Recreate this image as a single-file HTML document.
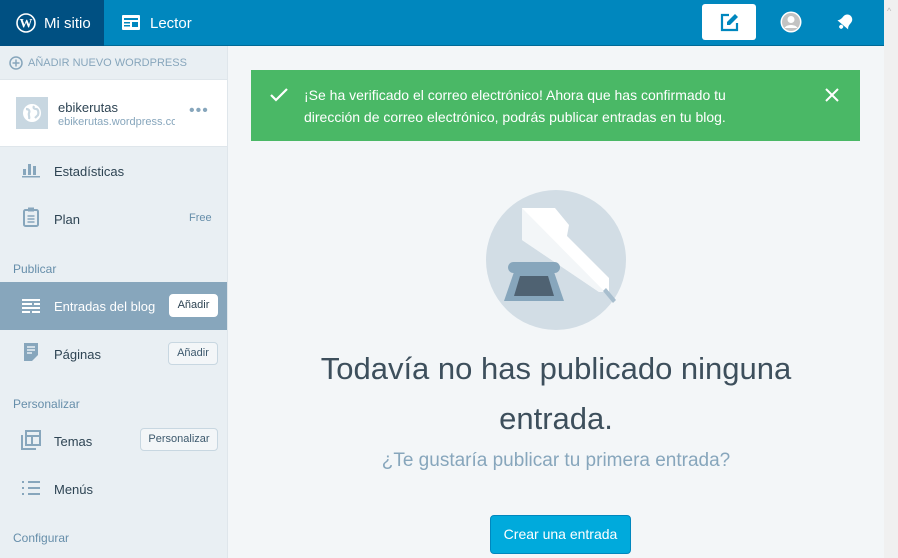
<!DOCTYPE html>
<html><head><meta charset="utf-8"><style>
*{box-sizing:border-box;margin:0;padding:0}
body{width:898px;height:558px;overflow:hidden;font-family:"Liberation Sans",sans-serif;background:#f3f6f8;position:relative}
.top{position:absolute;left:0;top:0;width:884px;height:46px;background:#0087be;border-bottom:1px solid #006a96}
.mi{position:absolute;left:0;top:0;width:104px;height:46px;background:#005082;color:#fff;font-size:15px}
.scroll{position:absolute;left:884px;top:0;width:14px;height:558px;background:#f0f0f0}
.side{position:absolute;left:0;top:46px;width:228px;height:512px;background:#e9eff3;border-right:1px solid #dfe6eb}
.item{position:absolute;left:0;width:227px;height:48px;color:#2e4453;font-size:13px}
.item span.l{position:absolute;left:54px;top:17px}
.btn{position:absolute;border:1px solid #c8d7e1;border-radius:4px;background:#f3f6f8;color:#3d596d;font-size:11px;height:23px;line-height:21px;text-align:center}
.sec{position:absolute;left:13px;color:#668eaa;font-size:12px}
</style></head><body>
<div class="top">
 <div class="mi"><svg style="position:absolute;left:16px;top:13px" width="20" height="20" viewBox="0 0 20 20"><circle cx="10" cy="10" r="9" fill="none" stroke="#fff" stroke-width="1.6"/><text x="10" y="14.5" text-anchor="middle" font-family="Liberation Serif" font-weight="bold" font-size="13" fill="#fff">W</text></svg><span style="position:absolute;left:44px;top:15px">Mi sitio</span></div>
 <svg style="position:absolute;left:122px;top:15px" width="18" height="15" viewBox="0 0 18 15"><rect x="0" y="0" width="18" height="15" rx="1" fill="#fff"/><rect x="2" y="3" width="14" height="2" fill="#0087be"/><rect x="2" y="7" width="6" height="1.5" fill="#0087be"/><rect x="2" y="10" width="6" height="1.5" fill="#0087be"/><rect x="10" y="7" width="6" height="5" fill="#0087be"/></svg>
 <span style="position:absolute;left:150px;top:15px;color:#fff;font-size:15px">Lector</span>
 <div style="position:absolute;left:702px;top:4px;width:54px;height:36px;background:#fff;border-radius:3px"><svg style="position:absolute;left:18px;top:9px" width="19" height="19" viewBox="0 0 19 19"><path d="M9 2H2v15h15v-7" fill="none" stroke="#0087be" stroke-width="2.2"/><path d="M15 1l3 3-8 8H7V9z" fill="#0087be"/></svg></div>
 <svg style="position:absolute;left:780px;top:11px" width="22" height="22" viewBox="0 0 22 22"><circle cx="11" cy="11" r="10.5" fill="#fff"/><circle cx="11" cy="11" r="9" fill="#c3c3c3"/><circle cx="11" cy="8.5" r="3.5" fill="#fff"/><path d="M4.5 17c2-4 11-4 13 0" fill="#fff"/></svg>
 <svg style="position:absolute;left:835px;top:10px" width="22" height="22" viewBox="0 0 22 22"><g transform="rotate(40 11 11)"><path d="M4 16c2-2 2-4 2-7a5 5 0 0 1 10 0c0 3 0 5 2 7z" fill="#fff"/><circle cx="11" cy="18.5" r="2" fill="#fff"/></g></svg>
</div>
<div class="scroll"><div style="position:absolute;left:3px;top:6px;color:#bbb;font-size:9px">^</div></div>
<div class="side">
 <div style="position:absolute;left:0;top:0;width:227px;height:34px;border-bottom:1px solid #dfe6eb">
  <svg style="position:absolute;left:9px;top:10px" width="14" height="14" viewBox="0 0 14 14"><circle cx="7" cy="7" r="6" fill="none" stroke="#87a6bc" stroke-width="1.5"/><path d="M7 3.5v7M3.5 7h7" stroke="#87a6bc" stroke-width="1.5"/></svg>
  <span style="position:absolute;left:28px;top:11px;font-size:11px;color:#87a6bc">AÑADIR NUEVO WORDPRESS</span></div>
 <div style="position:absolute;left:0;top:34px;width:227px;height:67px;background:#fff;border-bottom:1px solid #dfe6eb"></div>
 <div style="position:absolute;left:16px;top:51px;width:32px;height:32px;background:#c8d7e1"><svg style="position:absolute;left:6px;top:6px" width="20" height="20" viewBox="0 0 20 20"><circle cx="10" cy="10" r="9" fill="#fff"/><path d="M4 6c3 0 4 2 3 4s1 3 0 6M12 3c-1 2 0 3 2 3s3 3 2 6l-3 3" fill="none" stroke="#c8d7e1" stroke-width="2.2"/></svg></div>
 <span style="position:absolute;left:58px;top:54px;font-size:13px;color:#2e4453">ebikerutas</span>
 <span style="position:absolute;left:58px;top:70px;font-size:11px;color:#87a6bc;width:117px;overflow:hidden;white-space:nowrap">ebikerutas.wordpress.com</span>
 <span style="position:absolute;left:189px;top:56px;font-size:16px;color:#87a6bc;letter-spacing:1px">•••</span>
 <div class="item" style="top:101px"><svg style="position:absolute;left:22px;top:15px" width="18" height="16" viewBox="0 0 18 16"><rect x="1" y="7" width="3" height="6" fill="#87a6bc"/><rect x="6" y="2" width="3" height="11" fill="#87a6bc"/><rect x="11" y="4" width="3" height="9" fill="#87a6bc"/><rect x="0" y="14" width="18" height="1.5" fill="#87a6bc"/></svg><span class="l">Estadísticas</span></div>
 <div class="item" style="top:149px"><svg style="position:absolute;left:23px;top:12px" width="16" height="20" viewBox="0 0 16 20"><rect x="1" y="3" width="14" height="16" rx="1.5" fill="none" stroke="#87a6bc" stroke-width="2"/><rect x="5" y="0.5" width="6" height="4" fill="#87a6bc"/><path d="M4.5 9h7M4.5 12h7M4.5 15h7" stroke="#87a6bc" stroke-width="1.5"/></svg><span class="l">Plan</span><span style="position:absolute;left:189px;top:17px;font-size:11px;color:#668eaa">Free</span></div>
 <div class="sec" style="top:216px">Publicar</div>
 <div class="item" style="top:236px;background:#87a6bc;color:#fff"><svg style="position:absolute;left:22px;top:17px" width="18" height="14" viewBox="0 0 18 14"><path d="M0 1h18M0 5h10M12 5h6M0 9h18M0 13h8M10 13h8" stroke="#fff" stroke-width="2"/></svg><span class="l" style="width:102px;overflow:hidden;white-space:nowrap">Entradas del blog</span><div class="btn" style="left:169px;top:12px;width:49px;background:#fff;border-color:#fff;color:#2e4453">Añadir</div></div>
 <div class="item" style="top:284px"><svg style="position:absolute;left:23px;top:12px" width="16" height="20" viewBox="0 0 16 20"><path d="M1 1h14v12l-6 6H1z" fill="#87a6bc"/><path d="M4 5h8M4 8h8M4 11h5" stroke="#e9eff3" stroke-width="1.5"/></svg><span class="l">Páginas</span><div class="btn" style="left:168px;top:12px;width:50px">Añadir</div></div>
 <div class="sec" style="top:351px">Personalizar</div>
 <div class="item" style="top:371px"><svg style="position:absolute;left:21px;top:13px" width="20" height="20" viewBox="0 0 20 20"><path d="M1 5v14h14" fill="none" stroke="#87a6bc" stroke-width="2"/><rect x="5" y="1" width="14" height="14" fill="none" stroke="#87a6bc" stroke-width="2"/><path d="M5 6h14M11 6v9" stroke="#87a6bc" stroke-width="2"/></svg><span class="l">Temas</span><div class="btn" style="left:140px;top:11px;width:78px">Personalizar</div></div>
 <div class="item" style="top:419px"><svg style="position:absolute;left:22px;top:16px" width="18" height="14" viewBox="0 0 18 14"><path d="M0 1h2M6 1h12M0 7h2M6 7h12M0 13h2M6 13h12" stroke="#87a6bc" stroke-width="2"/></svg><span class="l">Menús</span></div>
 <div class="sec" style="top:485px">Configurar</div>
</div>
<div style="position:absolute;left:251px;top:70px;width:609px;height:71px;background:#4ab866;color:#fff;font-size:14px;line-height:22px">
 <svg style="position:absolute;left:18px;top:17px" width="20" height="16" viewBox="0 0 20 16"><path d="M2 8l5 5L18 2" fill="none" stroke="#fff" stroke-width="2.2"/></svg>
 <div style="position:absolute;left:53px;top:14px">¡Se ha verificado el correo electrónico! Ahora que has confirmado tu<br>dirección de correo electrónico, podrás publicar entradas en tu blog.</div>
 <svg style="position:absolute;left:574px;top:18px" width="14" height="14" viewBox="0 0 14 14"><path d="M1 1l12 12M13 1L1 13" stroke="#fff" stroke-width="2"/></svg>
</div>
<svg style="position:absolute;left:486px;top:190px" width="140" height="140" viewBox="0 0 140 140">
 <circle cx="70" cy="70" r="70" fill="#d2dde5"/>
 <path d="M36 18h33l14 17-2 11 42 42 0 14-10 0L36 50z" fill="#fff"/>
 <path d="M36 18l83 84-6 0L36 50z" fill="#f3f6f8"/>
 <path d="M120 98l10 12-3 3-10-12z" fill="#a8bece"/>
 <rect x="22" y="72" width="52" height="11" rx="5.5" fill="#87a6bc"/>
 <path d="M28 82h40l10 29H18z" fill="#87a6bc"/>
 <path d="M34 86h28l6 20H28z" fill="#4f6272"/>
</svg>
<div style="position:absolute;left:228px;top:344px;width:656px;text-align:center;font-size:31px;line-height:50px;color:#3d4f5c">Todavía no has publicado ninguna<br>entrada.</div>
<div style="position:absolute;left:228px;top:450px;width:656px;text-align:center;font-size:19px;color:#87a6bc">¿Te gustaría publicar tu primera entrada?</div>
<div style="position:absolute;left:490px;top:515px;width:141px;height:39px;background:#00aadc;border:1px solid #0087be;border-radius:4px;color:#fff;font-size:14px;text-align:center;line-height:37px">Crear una entrada</div>
</body></html>
